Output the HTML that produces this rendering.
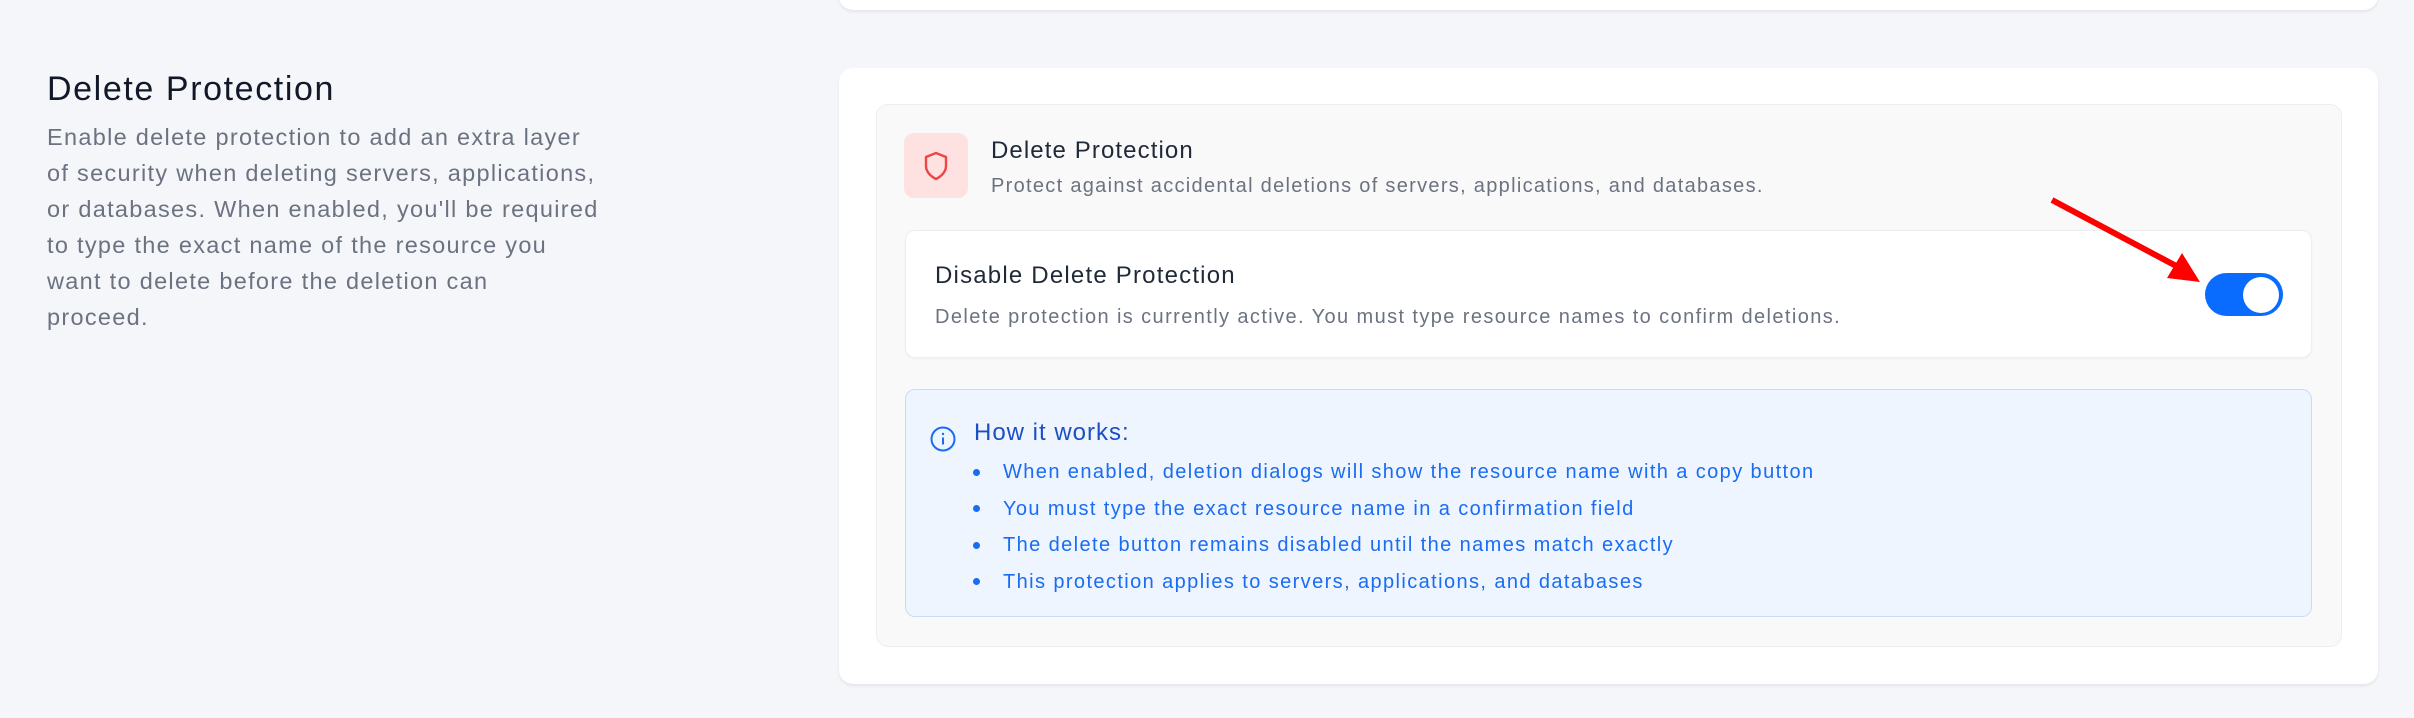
<!DOCTYPE html>
<html><head><meta charset="utf-8"><style>
*{margin:0;padding:0;box-sizing:border-box}
body{width:2414px;height:718px;background:#f5f6fa;font-family:"Liberation Sans",sans-serif;position:relative;overflow:hidden}
.abs{position:absolute;white-space:nowrap}
.card{background:#fff;border-radius:14px;box-shadow:0 2px 3px rgba(0,0,0,.07)}
</style></head><body>
<div class="abs card" style="left:839px;top:-20px;width:1539px;height:30px"></div>
<div class="abs" style="left:47px;top:68px;font-size:34px;color:#111827;line-height:42px;letter-spacing:1.6px">Delete Protection</div>
<div class="abs" style="left:47px;top:119px;font-size:23.5px;color:#6b7280;line-height:36px;letter-spacing:1.3px">Enable delete protection to add an extra layer<br>of security when deleting servers, applications,<br>or databases. When enabled, you'll be required<br>to type the exact name of the resource you<br>want to delete before the deletion can<br>proceed.</div>

<div class="abs card" style="left:839px;top:68px;width:1539px;height:616px"></div>
<div class="abs" style="left:876px;top:104px;width:1466px;height:543px;background:#f9f9fa;border:1px solid #eceef1;border-radius:12px"></div>
<div class="abs" style="left:904px;top:133px;width:64px;height:65px;background:#fee2e2;border-radius:10px"></div>
<svg class="abs" style="left:922px;top:150px" width="28" height="32" viewBox="0 0 28 32"><path d="M14 3 L24 7 V16 C24 22 19 26.5 14 29 C9 26.5 4 22 4 16 V7 Z" fill="none" stroke="#ef4444" stroke-width="2.4" stroke-linejoin="round"/></svg>
<div class="abs" style="left:991px;top:136px;font-size:24px;color:#1f2937;line-height:30px;letter-spacing:1.1px">Delete Protection</div>
<div class="abs" style="left:991px;top:173px;font-size:20px;color:#6b7280;line-height:26px;letter-spacing:1.3px">Protect against accidental deletions of servers, applications, and databases.</div>

<div class="abs" style="left:905px;top:230px;width:1407px;height:128px;background:#fff;border:1px solid #eceef1;border-radius:10px;box-shadow:0 1px 2px rgba(0,0,0,.04)"></div>
<div class="abs" style="left:935px;top:261px;font-size:24px;color:#1f2937;line-height:30px;letter-spacing:1.2px">Disable Delete Protection</div>
<div class="abs" style="left:935px;top:304px;font-size:20px;color:#6b7280;line-height:26px;letter-spacing:1.4px">Delete protection is currently active. You must type resource names to confirm deletions.</div>
<div class="abs" style="left:2205px;top:273px;width:78px;height:43px;background:#0a6cff;border-radius:22px"></div>
<div class="abs" style="left:2243px;top:277px;width:36px;height:36px;background:#fff;border-radius:50%"></div>

<svg class="abs" style="left:2040px;top:190px" width="170" height="100" viewBox="0 0 170 100"><line x1="12" y1="10" x2="140" y2="78" stroke="#ff0000" stroke-width="6"/><polygon points="160,92 127,88 142,63" fill="#ff0000"/></svg>

<div class="abs" style="left:905px;top:389px;width:1407px;height:228px;background:#eef5ff;border:1px solid #c7dcfb;border-radius:10px"></div>
<svg class="abs" style="left:930px;top:426px" width="26" height="26" viewBox="0 0 26 26"><circle cx="13" cy="13" r="11.5" fill="none" stroke="#1a6cf0" stroke-width="2"/><line x1="13" y1="11.5" x2="13" y2="18.5" stroke="#1a6cf0" stroke-width="2"/><circle cx="13" cy="8" r="1.2" fill="#1a6cf0"/></svg>
<div class="abs" style="left:974px;top:418px;font-size:24px;color:#1d4fc4;line-height:30px;letter-spacing:1px">How it works:</div>
<div class="abs" style="left:1003px;top:454px;font-size:20px;color:#1a6cf0;line-height:36.5px;letter-spacing:1.4px">
When enabled, deletion dialogs will show the resource name with a copy button<br>
You must type the exact resource name in a confirmation field<br>
The delete button remains disabled until the names match exactly<br>
This protection applies to servers, applications, and databases</div>
<div class="abs" style="left:973px;top:469px;width:7px;height:7px;border-radius:50%;background:#1a6cf0"></div>
<div class="abs" style="left:973px;top:505px;width:7px;height:7px;border-radius:50%;background:#1a6cf0"></div>
<div class="abs" style="left:973px;top:542px;width:7px;height:7px;border-radius:50%;background:#1a6cf0"></div>
<div class="abs" style="left:973px;top:578px;width:7px;height:7px;border-radius:50%;background:#1a6cf0"></div>
</body></html>
